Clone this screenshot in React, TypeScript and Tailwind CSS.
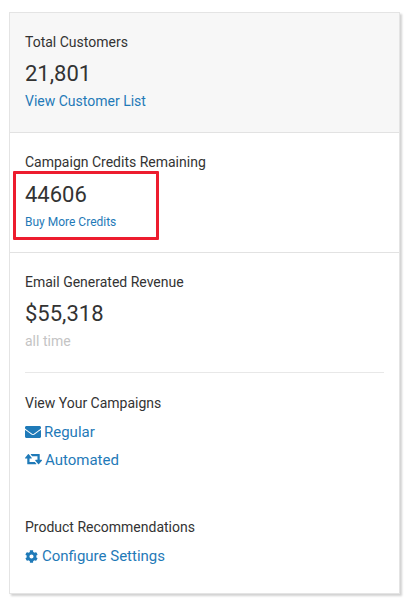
import { FaCog, FaEnvelope } from 'react-icons/fa';

const linkClass = 'text-[#1f7ab8]';

function RetweetIcon() {
  return (
    <svg viewBox="0 0 1920 1792" fill="currentColor" className="h-[16px] w-[17px]">
      <path d="M1280 1344q0 13-9.5 22.5t-22.5 9.5h-960q-8 0-13.5-2t-9-7-5.5-9.5-3-11.5-1-11.5v-600h-192q-26 0-45-19t-19-45q0-24 15-41l320-384q19-22 49-22t49 22l320 384q15 17 15 41 0 26-19 45t-45 19h-192v384h576q16 0 25 11l160 192q7 11 7 21zm640-416q0 24-15 41l-320 384q-20 23-49 23t-49-23l-320-384q-15-17-15-41 0-26 19-45t45-19h192v-384h-576q-16 0-25-12l-160-192q-7-9-7-20 0-13 9.5-22.5t22.5-9.5h960q8 0 13.5 2t9 7 5.5 9.5 3 11.5 1 11.5v600h192q26 0 45 19t19 45z" />
    </svg>
  );
}

export default function App() {
  return (
    <div className="h-[599px] w-[407px] overflow-hidden bg-white pt-3 pl-[9px] font-['Roboto',sans-serif] text-[14px] leading-5 text-[#333]">
      <div className="relative h-[582px] w-[391px] border border-[#e4e4e4] shadow-[2px_2px_2px_rgba(0,0,0,0.18)]">
        <section className="h-[120px] border-b border-[#e2e2e2] bg-[#f7f7f7] px-[15px] pt-[19px]">
          <p>Total Customers</p>
          <p className="mt-[7px] text-[22px] leading-[30px]">21,801</p>
          <a className={`mt-[2px] block ${linkClass}`}>View Customer List</a>
        </section>

        <section className="h-[120px] border-b border-[#e2e2e2] px-[15px] pt-[19px]">
          <p>Campaign Credits Remaining</p>
          <p className="mt-2 text-[22px] leading-[30px]">44606</p>
          <a className={`mt-[2px] block text-[12px] ${linkClass}`}>Buy More Credits</a>
        </section>

        <section className="px-[15px] pt-[19px]">
          <p>Email Generated Revenue</p>
          <p className="mt-[7px] text-[22px] leading-[30px]">$55,318</p>
          <p className="mt-[2px] text-[#c4c4c4]">all time</p>

          <div className="mt-[21px] border-t border-[#e8e8e8]" />

          <p className="mt-5">View Your Campaigns</p>
          <a className={`mt-[9px] flex items-center gap-[3px] text-[15px] ${linkClass}`}>
            <FaEnvelope className="h-[16px] w-[16px]" />
            Regular
          </a>
          <a className={`mt-2 flex items-center gap-[3px] text-[15px] ${linkClass}`}>
            <RetweetIcon />
            Automated
          </a>

          <p className="mt-[47px]">Product Recommendations</p>
          <a className={`mt-[9px] flex items-center gap-1 text-[15px] ${linkClass}`}>
            <FaCog className="h-[13px] w-[13px]" />
            Configure Settings
          </a>
        </section>

        <div className="absolute top-[158px] left-[3px] h-[69px] w-[146px] rounded-[1px] border-[3px] border-[#ed1c2e]" />
      </div>
    </div>
  );
}
